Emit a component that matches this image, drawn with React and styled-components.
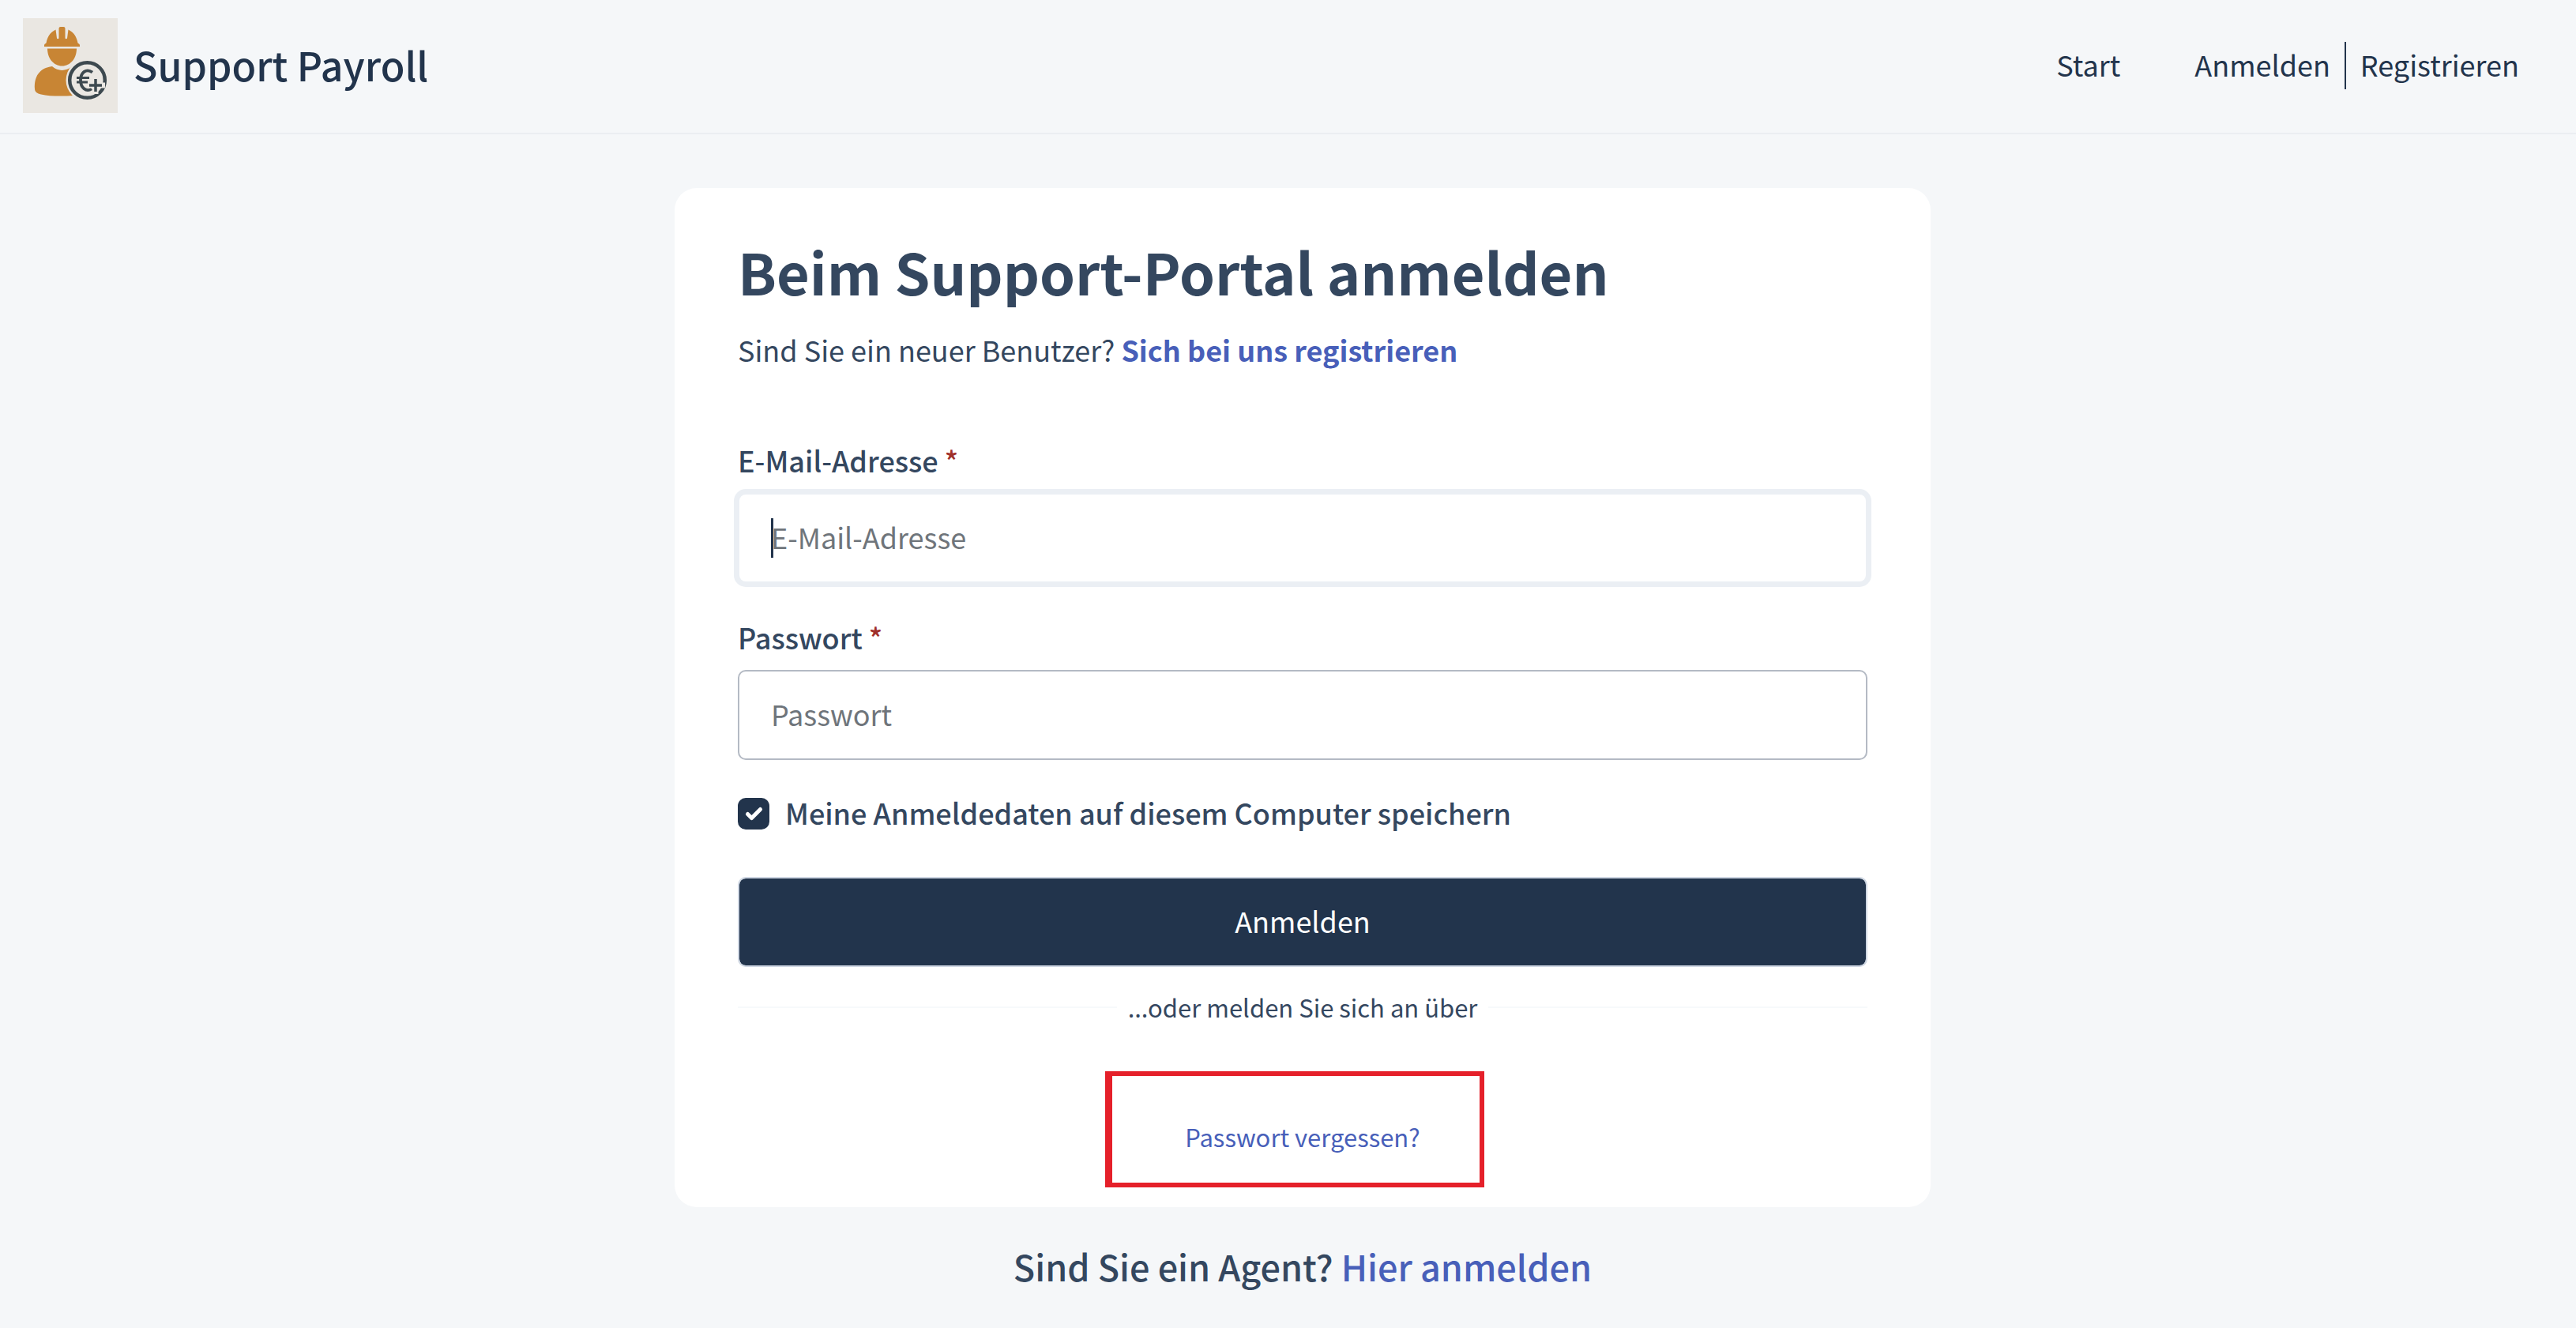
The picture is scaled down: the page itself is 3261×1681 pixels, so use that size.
import React from 'react';
import styled, { createGlobalStyle } from 'styled-components';

const navy = '#22344c';
const slate = '#34475f';
const blue = '#485fb9';
const grey = '#f5f7f9';

const GlobalStyle = createGlobalStyle`
  * {
    box-sizing: border-box;
  }

  body {
    margin: 0;
    background: ${grey};
    color: ${slate};
    font-family: "Noto Sans CJK SC", "Noto Sans", sans-serif;
    font-size: 36px;
    line-height: 48px;
  }

  h1, h2, p {
    margin: 0;
  }
`;

const Header = styled.header`
  display: flex;
  align-items: center;
  justify-content: space-between;
  padding: 23px 72px 25px 29px;
  border-bottom: 2px solid #ebeef2;
`;

const Brand = styled.a`
  display: flex;
  align-items: center;
  gap: 20px;
  color: ${navy};
  font-size: 50px;
  font-weight: 500;
  line-height: 60px;
  text-decoration: none;
`;

const BrandName = styled.span`
  padding-bottom: 4px;
`;

const Nav = styled.nav`
  display: flex;
  align-items: center;
`;

const NavLink = styled.a`
  padding-bottom: 4px;
  color: ${navy};
  text-decoration: none;
`;

const Account = styled.div`
  display: flex;
  align-items: center;
  gap: 18px;
  margin-left: 94px;
`;

const Separator = styled.span`
  width: 2px;
  height: 60px;
  background: ${navy};
`;

const Main = styled.main`
  display: flex;
  flex-direction: column;
  align-items: center;
  padding: 68px 0 40px 37px;
`;

const Card = styled.section`
  width: 100%;
  max-width: 1590px;
  padding: 56px 80px 67px;
  border-radius: 28px;
  background: #fff;
`;

const Title = styled.h1`
  font-size: 72px;
  font-weight: 700;
  line-height: 98px;
`;

const Intro = styled.p`
  margin-top: 26px;
`;

const TextLink = styled.a`
  color: ${blue};
  font-weight: ${({ $weight }) => $weight || 400};
  text-decoration: none;
`;

const Form = styled.form`
  margin-top: 92px;
`;

const Field = styled.div`
  margin-bottom: 44px;
`;

const Label = styled.label`
  display: block;
  margin-bottom: 18px;
  font-weight: 500;
`;

const Required = styled.span`
  color: #a0302b;
`;

const InputWrap = styled.div`
  position: relative;
`;

const Input = styled.input`
  display: block;
  width: 100%;
  height: 114px;
  padding: 0 40px 4px;
  border: 2px solid #b4bac4;
  border-radius: 10px;
  outline: none;
  background: #fff;
  color: ${navy};
  caret-color: transparent;
  font: inherit;

  &::placeholder {
    color: #6f757b;
    opacity: 1;
  }

  &:focus {
    border-color: #ebeff4;
    box-shadow: 0 0 0 5px #ebeff4;
  }
`;

const Caret = styled.span`
  display: none;
  position: absolute;
  top: 32px;
  left: 42px;
  width: 3px;
  height: 50px;
  background: ${navy};

  ${Input}:focus:placeholder-shown + & {
    display: block;
  }
`;

const Remember = styled.label`
  display: flex;
  align-items: center;
  gap: 20px;
  font-weight: 500;
`;

const RememberText = styled.span`
  padding-bottom: 4px;
  line-height: 44px;
`;

const Tick = styled.span`
  display: grid;
  width: 40px;
  height: 40px;

  > * {
    grid-area: 1 / 1;
  }

  svg {
    pointer-events: none;
  }
`;

const Checkbox = styled.input`
  appearance: none;
  width: 40px;
  height: 40px;
  margin: 0;
  border: 2px solid ${navy};
  border-radius: 10px;
  background: #fff;

  &:checked {
    background: ${navy};
  }
`;

const Submit = styled.button`
  display: block;
  width: 100%;
  height: 114px;
  margin-top: 56px;
  padding: 0 0 4px;
  border: 2px solid #cfd7e3;
  border-radius: 10px;
  background: ${navy};
  background-clip: padding-box;
  color: #fff;
  font: inherit;
`;

const Divider = styled.div`
  display: flex;
  align-items: center;
  gap: 14px;
  margin-top: 29px;
  font-size: 31px;
  line-height: 44px;

  &::before,
  &::after {
    content: '';
    flex: 1;
    height: 2px;
    background: #f7f9fb;
  }
`;

const Forgot = styled.p`
  margin-top: 120px;
  font-size: 31px;
  line-height: 44px;
  text-align: center;
`;

const Marked = styled.span`
  display: inline-block;
  position: relative;
`;

// the left edge is drawn thicker than the other three
const Marker = styled.span`
  position: absolute;
  top: -61px;
  right: -81px;
  bottom: -42px;
  left: -101px;
  border: 6px solid #e5202a;
  border-left-width: 9px;
  pointer-events: none;
`;

const Agent = styled.h2`
  margin-top: 45px;
  font-size: 45px;
  font-weight: 500;
  line-height: 60px;
`;

const Logo = () => (
  <svg width="120" height="120" viewBox="0 0 120 120" aria-hidden="true">
    <rect width="120" height="120" fill="#eae7e2" />
    <g fill="#c88534">
      <path d="M27 36v-2q0-1.500 2.500-2.500C31 23.500 34.500 18 41.500 14.500L43 25.500q1 1.500 2.500 0V13q0-2 2-2h4q2 0 2 2v12.500q1.500 1.500 2.500 0l1.500-11C64.500 18 68 23.500 69.500 31.500q2.500 1 2.500 2.500v2z" />
      <path d="M31 38.500h37C68 51 60 60.500 49.500 60.500S31 51 31 38.500z" />
      <path d="M37 61c8 6.500 17 6.500 25 0 5 1 8 3 11 5l-9 32c-14 1-30 1-41-1.500-5-1-8-3.500-8-7C14 74 21 63 37 61z" />
    </g>
    <circle cx="81.500" cy="78.500" r="27" fill="#eae7e2" />
    <circle cx="81.500" cy="78.500" r="22.300" fill="none" stroke="#3d494f" strokeWidth="4.500" />
    <g fill="none" stroke="#3d494f" strokeWidth="3.800">
      <path d="M88 68.500C80 63 73 69 73 78.500S80 94 87 89.500" />
      <path d="M68 75.500h16M68 81h14" strokeWidth="3" />
    </g>
    <path d="M92 75v21M83 85h21" stroke="#eae7e2" strokeWidth="7" />
    <path d="M92 77v16M84 85h16" stroke="#3d494f" strokeWidth="3.500" />
    <path d="M97 95l4-5" stroke="#3d494f" strokeWidth="2" />
  </svg>
);

const App = () => (
  <>
    <GlobalStyle />
    <Header>
      <Brand href="#">
        <Logo />
        <BrandName>Support Payroll</BrandName>
      </Brand>
      <Nav>
        <NavLink href="#">Start</NavLink>
        <Account>
          <NavLink href="#">Anmelden</NavLink>
          <Separator />
          <NavLink href="#">Registrieren</NavLink>
        </Account>
      </Nav>
    </Header>

    <Main>
      <Card>
        <Title>Beim Support-Portal anmelden</Title>
        <Intro>
          Sind Sie ein neuer Benutzer? <TextLink href="#" $weight={700}>Sich bei uns registrieren</TextLink>
        </Intro>

        <Form onSubmit={e => e.preventDefault()}>
          <Field>
            <Label htmlFor="email">E-Mail-Adresse <Required>*</Required></Label>
            <InputWrap>
              <Input id="email" type="email" placeholder="E-Mail-Adresse" autoFocus />
              <Caret />
            </InputWrap>
          </Field>

          <Field>
            <Label htmlFor="password">Passwort <Required>*</Required></Label>
            <Input id="password" type="password" placeholder="Passwort" />
          </Field>

          <Remember htmlFor="remember">
            <Tick>
              <Checkbox id="remember" type="checkbox" defaultChecked />
              <svg width="40" height="40" viewBox="0 0 40 40" aria-hidden="true">
                <path d="M12.500 20.500l5 5 11-11" fill="none" stroke="#fff" strokeWidth="5" strokeLinecap="round" strokeLinejoin="round" />
              </svg>
            </Tick>
            <RememberText>Meine Anmeldedaten auf diesem Computer speichern</RememberText>
          </Remember>

          <Submit type="submit">Anmelden</Submit>
        </Form>

        <Divider>...oder melden Sie sich an über</Divider>

        <Forgot>
          <Marked>
            <TextLink href="#">Passwort vergessen?</TextLink>
            <Marker />
          </Marked>
        </Forgot>
      </Card>

      <Agent>
        Sind Sie ein Agent? <TextLink href="#" $weight={500}>Hier anmelden</TextLink>
      </Agent>
    </Main>
  </>
);

export default App;
